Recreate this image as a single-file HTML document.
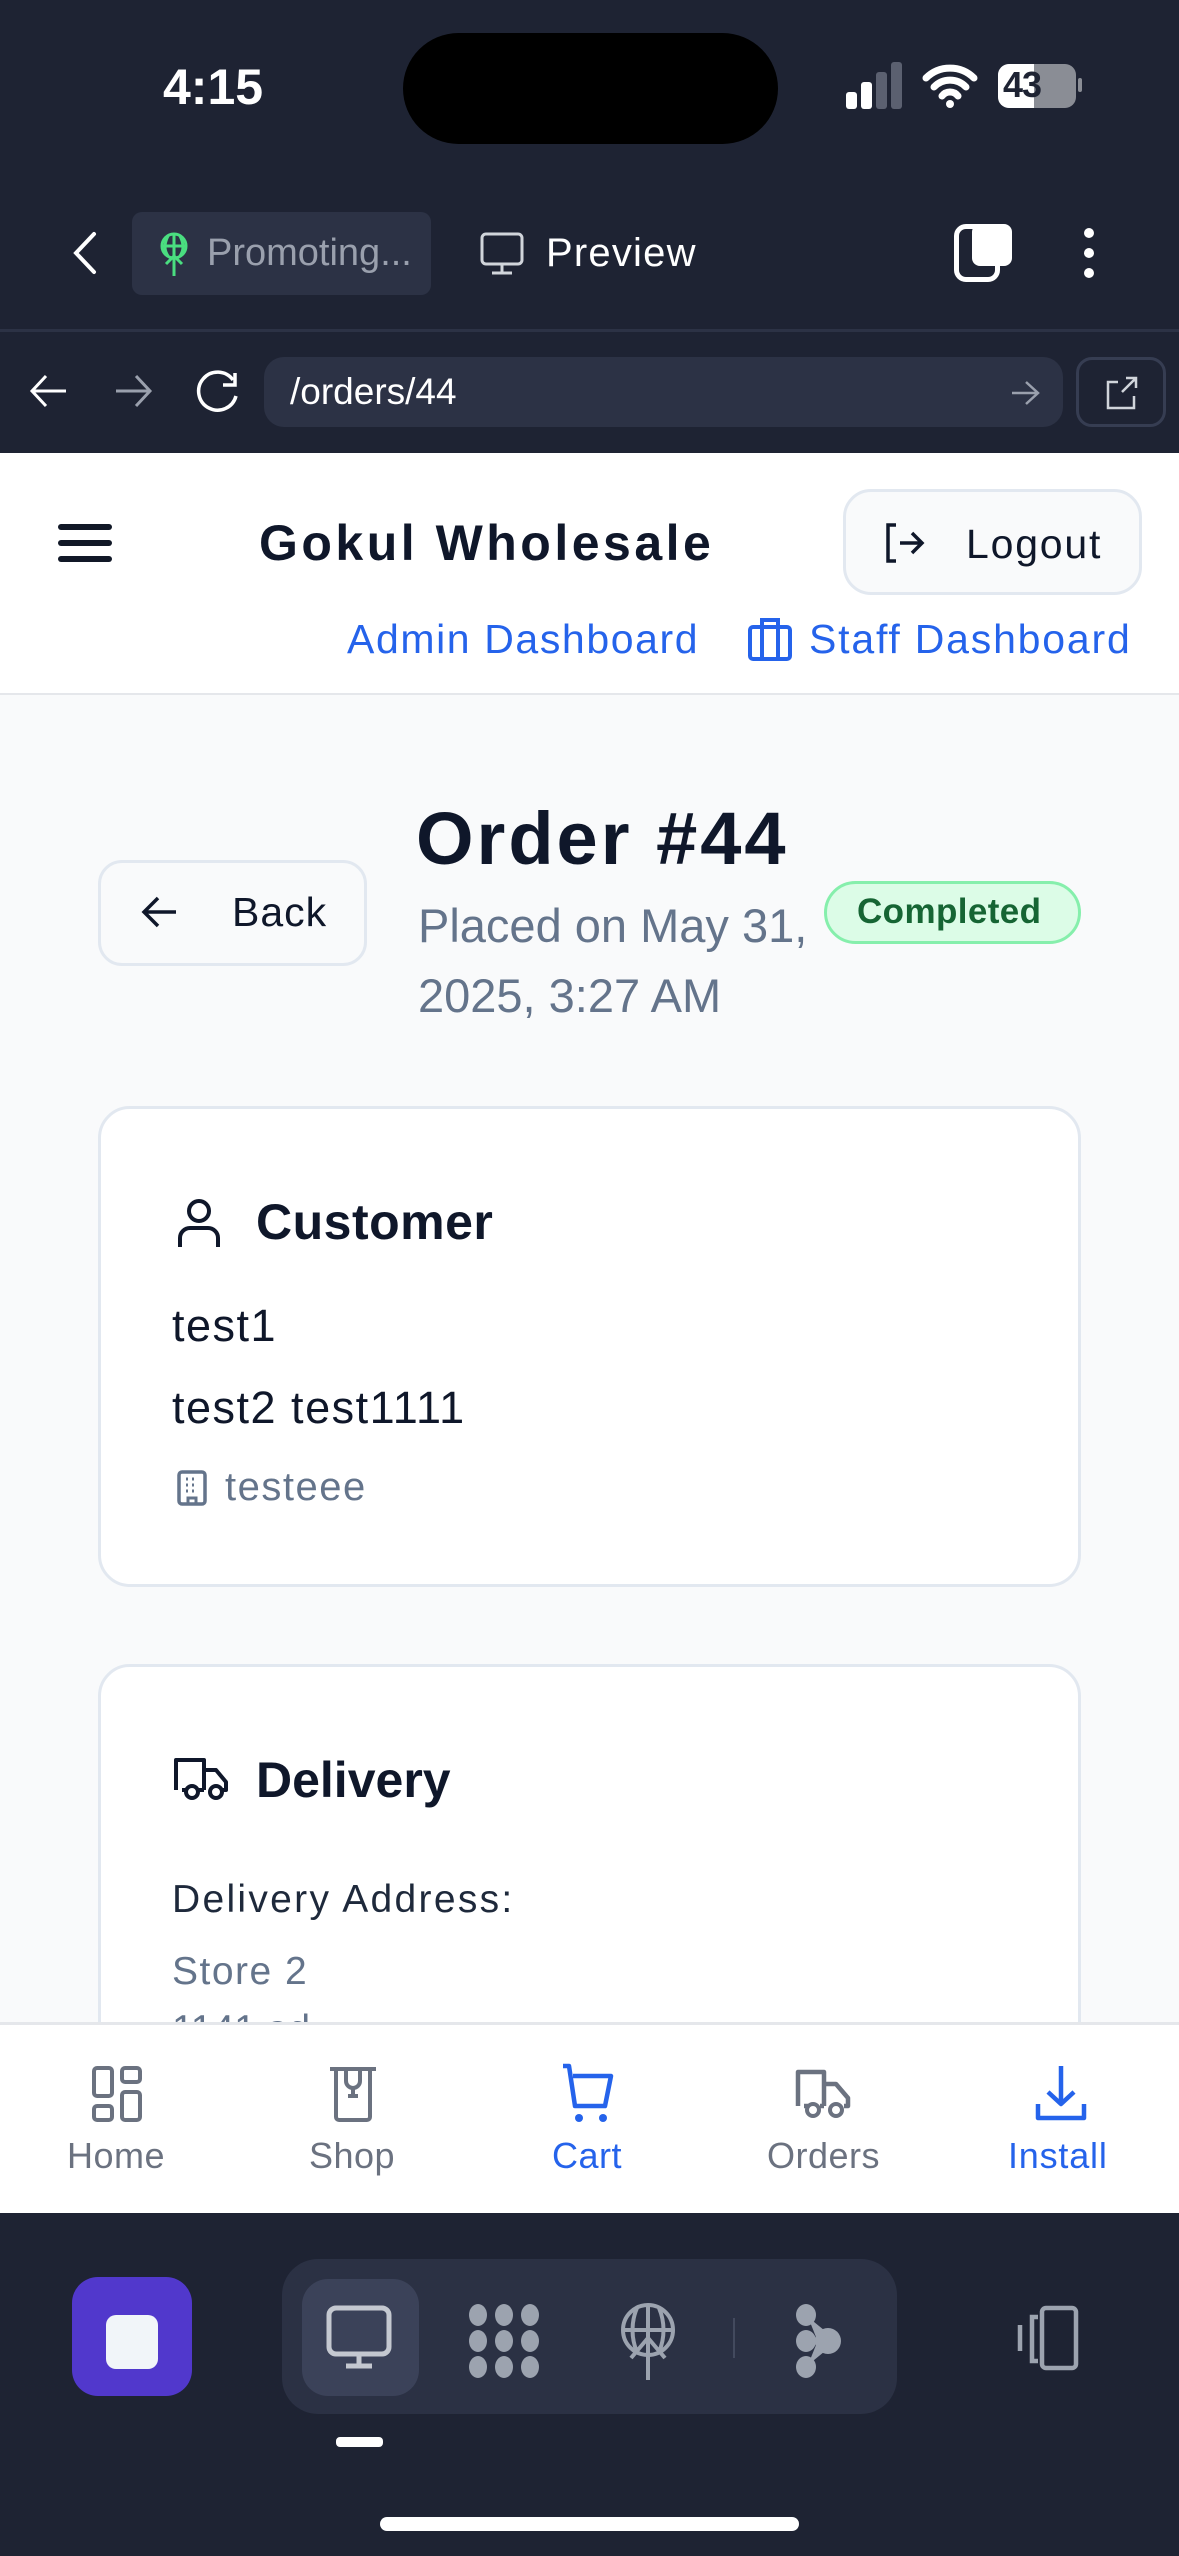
<!DOCTYPE html>
<html><head><meta charset="utf-8"><style>
*{margin:0;padding:0;box-sizing:border-box}
body{width:1179px;height:2556px;position:relative;overflow:hidden;background:#f9fafb;font-family:"Liberation Sans",sans-serif}
.a{position:absolute}
.t{position:absolute;white-space:nowrap;line-height:1}
</style></head><body>
<!-- top dark -->
<div class="a" style="left:0;top:0;width:1179px;height:453px;background:#1e2333"></div>
<div class="t" style="left:163px;top:62px;font-size:50px;font-weight:bold;color:#fff">4:15</div>
<div class="a" style="left:403px;top:33px;width:375px;height:111px;border-radius:56px;background:#000"></div>
<!-- signal -->
<div class="a" style="left:846px;top:92px;width:11px;height:17px;background:#fff;border-radius:3px"></div>
<div class="a" style="left:861px;top:82px;width:11px;height:27px;background:#fff;border-radius:3px"></div>
<div class="a" style="left:876px;top:72px;width:11px;height:37px;background:#5b6070;border-radius:3px"></div>
<div class="a" style="left:891px;top:62px;width:11px;height:47px;background:#5b6070;border-radius:3px"></div>
<svg class="a" style="left:922px;top:62px" width="56" height="46" viewBox="0 0 56 46"><path d="M4 16a34 34 0 0 1 48 0M12 25a22 22 0 0 1 32 0M20 34a10 10 0 0 1 16 0" stroke="#fff" stroke-width="7" fill="none" stroke-linecap="round"/><circle cx="28" cy="42" r="4" fill="#fff"/></svg>
<div class="a" style="left:998px;top:64px;width:78px;height:44px;border-radius:11px;background:#8a8d95;overflow:hidden"><div style="width:36px;height:44px;background:#fff"></div></div>
<div class="t" style="left:1003px;top:67px;font-size:36px;font-weight:bold;color:#1e2333;letter-spacing:-1px">43</div>
<div class="a" style="left:1078px;top:78px;width:4px;height:14px;background:#8a8d95;border-radius:2px"></div>
<!-- browser row -->
<svg class="a" style="left:68px;top:230px" width="34" height="46" viewBox="0 0 34 46"><path d="M26 4L8 23l18 19" stroke="#fff" stroke-width="4" fill="none" stroke-linecap="round"/></svg>
<div class="a" style="left:132px;top:212px;width:299px;height:83px;border-radius:10px;background:#2c3245"></div>
<svg class="a" style="left:158px;top:230px" width="32" height="48" viewBox="0 0 32 48"><circle cx="16" cy="16" r="12" stroke="#4ade80" stroke-width="3" fill="none"/><path d="M4 16h24M16 4v42M10 6c-4 8-4 14 0 20M22 6c4 8 4 14 0 20M8 34l8-8 8 8" stroke="#4ade80" stroke-width="3" fill="none"/></svg>
<div class="t" style="left:207px;top:234px;font-size:38px;color:#9aa0ad">Promoting...</div>
<svg class="a" style="left:480px;top:232px" width="44" height="44" viewBox="0 0 44 44"><rect x="2" y="2" width="40" height="30" rx="4" stroke="#d1d5db" stroke-width="3" fill="none"/><path d="M22 32v8M12 41h20" stroke="#d1d5db" stroke-width="3"/></svg>
<div class="t" style="left:546px;top:233px;font-size:40px;color:#fff;letter-spacing:1.2px">Preview</div>
<div class="a" style="left:954px;top:224px;width:46px;height:58px;border:5px solid #fff;border-radius:12px"></div>
<div class="a" style="left:972px;top:224px;width:40px;height:42px;background:#fff;border-radius:8px"></div>
<div class="a" style="left:1084px;top:228px;width:10px;height:10px;border-radius:5px;background:#fff"></div>
<div class="a" style="left:1084px;top:248px;width:10px;height:10px;border-radius:5px;background:#fff"></div>
<div class="a" style="left:1084px;top:268px;width:10px;height:10px;border-radius:5px;background:#fff"></div>
<div class="a" style="left:0;top:329px;width:1179px;height:3px;background:#2c3245"></div>
<!-- url row -->
<svg class="a" style="left:28px;top:372px" width="42" height="38" viewBox="0 0 42 38"><path d="M38 19H4M18 4L4 19l14 15" stroke="#fff" stroke-width="3" fill="none"/></svg>
<svg class="a" style="left:112px;top:372px" width="42" height="38" viewBox="0 0 42 38"><path d="M4 19h34M24 4l14 15-14 15" stroke="#9aa0ad" stroke-width="3" fill="none"/></svg>
<svg class="a" style="left:195px;top:370px" width="46" height="44" viewBox="0 0 46 44"><path d="M38 10A19 19 0 1 0 41 26" stroke="#fff" stroke-width="3.5" fill="none"/><path d="M40 3v12H28" stroke="#fff" stroke-width="3.5" fill="none"/></svg>
<div class="a" style="left:264px;top:357px;width:799px;height:70px;border-radius:20px;background:#2c3245"></div>
<div class="t" style="left:290px;top:373px;font-size:37px;color:#fff">/orders/44</div>
<svg class="a" style="left:1010px;top:380px" width="30" height="26" viewBox="0 0 30 26"><path d="M2 13h26M16 2l12 11-12 11" stroke="#9aa0ad" stroke-width="2.5" fill="none"/></svg>
<div class="a" style="left:1076px;top:357px;width:90px;height:70px;border-radius:16px;border:3px solid #363d52"></div>
<svg class="a" style="left:1104px;top:376px" width="34" height="34" viewBox="0 0 34 34"><path d="M14 6H4v26h26V20M18 16L32 2M22 2h10v10" stroke="#d1d5db" stroke-width="2.5" fill="none"/></svg>
<!-- header -->
<div class="a" style="left:0;top:453px;width:1179px;height:242px;background:#fff;border-bottom:2px solid #e5e7eb"></div>
<div class="a" style="left:58px;top:524px;width:54px;height:6px;background:#111827;border-radius:3px"></div>
<div class="a" style="left:58px;top:540px;width:54px;height:6px;background:#111827;border-radius:3px"></div>
<div class="a" style="left:58px;top:556px;width:54px;height:6px;background:#111827;border-radius:3px"></div>
<div class="t" style="left:259px;top:518px;font-size:50px;font-weight:bold;color:#0f172a;letter-spacing:3.5px">Gokul Wholesale</div>
<div class="a" style="left:843px;top:489px;width:299px;height:106px;border-radius:28px;border:3px solid #e2e8f0;background:#f9fafb"></div>
<svg class="a" style="left:882px;top:521px" width="44" height="44" viewBox="0 0 44 44"><path d="M14 4H6v36h8M18 22h22M30 12l10 10-10 10" stroke="#0f172a" stroke-width="3.5" fill="none"/></svg>
<div class="t" style="left:966px;top:524px;font-size:41px;color:#0f172a;letter-spacing:1.8px">Logout</div>
<div class="t" style="left:347px;top:619px;font-size:41px;color:#2563eb;letter-spacing:1.6px">Admin Dashboard</div>
<svg class="a" style="left:747px;top:617px" width="46" height="44" viewBox="0 0 46 44"><rect x="3" y="10" width="40" height="32" rx="3" stroke="#2563eb" stroke-width="4" fill="none"/><path d="M15 10V3h16v7M15 10v32M31 10v32" stroke="#2563eb" stroke-width="4" fill="none"/></svg>
<div class="t" style="left:809px;top:619px;font-size:41px;color:#2563eb;letter-spacing:1.8px">Staff Dashboard</div>
<!-- order header -->
<div class="a" style="left:98px;top:860px;width:269px;height:106px;border-radius:24px;border:3px solid #e2e8f0;background:#f9fafb"></div>
<svg class="a" style="left:140px;top:893px" width="40" height="38" viewBox="0 0 40 38"><path d="M36 19H4M18 5L4 19l14 14" stroke="#0f172a" stroke-width="3.5" fill="none"/></svg>
<div class="t" style="left:232px;top:892px;font-size:41px;color:#0f172a;letter-spacing:1px">Back</div>
<div class="t" style="left:416px;top:802px;font-size:74px;font-weight:bold;color:#0f172a;letter-spacing:3px">Order #44</div>
<div class="t" style="left:418px;top:891px;font-size:47px;color:#64748b;line-height:70px">Placed on May 31,<br>2025, 3:27 AM</div>
<div class="a" style="left:824px;top:881px;width:257px;height:63px;border-radius:32px;border:3px solid #86efac;background:#dcfce7"></div>
<div class="t" style="left:857px;top:894px;font-size:35px;font-weight:bold;color:#166534;letter-spacing:0.4px">Completed</div>
<!-- customer card -->
<div class="a" style="left:98px;top:1106px;width:983px;height:481px;border-radius:32px;border:3px solid #e2e8f0;background:#fff"></div>
<svg class="a" style="left:176px;top:1198px" width="46" height="50" viewBox="0 0 46 50"><circle cx="23" cy="13" r="10" stroke="#0f172a" stroke-width="4" fill="none"/><path d="M4 49V40a10 10 0 0 1 10-10h18a10 10 0 0 1 10 10v9" stroke="#0f172a" stroke-width="4" fill="none"/></svg>
<div class="t" style="left:256px;top:1197px;font-size:50px;font-weight:bold;color:#0f172a;letter-spacing:0.5px">Customer</div>
<div class="t" style="left:172px;top:1303px;font-size:45px;color:#0f172a;letter-spacing:1.5px">test1</div>
<div class="t" style="left:172px;top:1385px;font-size:45px;color:#0f172a;letter-spacing:1.5px">test2 test1111</div>
<svg class="a" style="left:176px;top:1470px" width="32" height="36" viewBox="0 0 32 36"><rect x="3" y="2" width="26" height="32" rx="3" stroke="#64748b" stroke-width="3.5" fill="none"/><path d="M10 9h2M16 9h2M22 9h0M10 15h2M16 15h2M10 21h2M16 21h2M12 34v-6h8v6" stroke="#64748b" stroke-width="3" fill="none"/></svg>
<div class="t" style="left:225px;top:1467px;font-size:40px;color:#64748b;letter-spacing:1.5px">testeee</div>
<!-- delivery card -->
<div class="a" style="left:98px;top:1664px;width:983px;height:500px;border-radius:32px;border:3px solid #e2e8f0;background:#fff"></div>
<svg class="a" style="left:172px;top:1754px" width="58" height="50" viewBox="0 0 58 50"><path d="M4 36V6h28v30M32 16h12l10 12v8h-4M32 36h-6M14 36h-4" stroke="#0f172a" stroke-width="4" fill="none" stroke-linejoin="round"/><circle cx="20" cy="38" r="6" stroke="#0f172a" stroke-width="4" fill="none"/><circle cx="44" cy="38" r="6" stroke="#0f172a" stroke-width="4" fill="none"/></svg>
<div class="t" style="left:256px;top:1755px;font-size:50px;font-weight:bold;color:#0f172a">Delivery</div>
<div class="t" style="left:172px;top:1880px;font-size:39px;color:#1e293b;letter-spacing:2.3px">Delivery Address:</div>
<div class="t" style="left:172px;top:1952px;font-size:39px;color:#64748b;letter-spacing:1.5px">Store 2</div>
<div class="t" style="left:172px;top:2010px;font-size:39px;color:#64748b">1141 ad</div>
<!-- bottom nav -->
<div class="a" style="left:0;top:2022px;width:1179px;height:191px;background:#fff;border-top:3px solid #e5e7eb"></div>
<svg class="a" style="left:92px;top:2066px" width="50" height="56" viewBox="0 0 50 56"><rect x="2" y="2" width="18" height="28" rx="3" stroke="#6b7280" stroke-width="4" fill="none"/><rect x="30" y="2" width="18" height="14" rx="3" stroke="#6b7280" stroke-width="4" fill="none"/><rect x="30" y="26" width="18" height="28" rx="3" stroke="#6b7280" stroke-width="4" fill="none"/><rect x="2" y="40" width="18" height="14" rx="3" stroke="#6b7280" stroke-width="4" fill="none"/></svg>
<div class="t" style="left:67px;top:2138px;font-size:36px;color:#6b7280;letter-spacing:0.5px">Home</div>
<svg class="a" style="left:326px;top:2066px" width="54" height="56" viewBox="0 0 54 56"><path d="M4 3h46M10 3v48a3 3 0 0 0 3 3h28a3 3 0 0 0 3-3V3M20 3v12a7 7 0 0 0 14 0V3M27 22v8M22 30h10" stroke="#6b7280" stroke-width="4" fill="none"/></svg>
<div class="t" style="left:309px;top:2138px;font-size:36px;color:#6b7280;letter-spacing:0.5px">Shop</div>
<svg class="a" style="left:559px;top:2062px" width="60" height="64" viewBox="0 0 60 64"><path d="M4 4h6l6 40h30l6-30H14" stroke="#2563eb" stroke-width="4.5" fill="none" stroke-linejoin="round"/><circle cx="20" cy="56" r="4" fill="#2563eb"/><circle cx="44" cy="56" r="4" fill="#2563eb"/></svg>
<div class="t" style="left:552px;top:2138px;font-size:36px;color:#2563eb;letter-spacing:0.5px">Cart</div>
<svg class="a" style="left:794px;top:2068px" width="60" height="54" viewBox="0 0 60 54"><path d="M4 38V4h26v34M30 16h12l12 14v8h-4M30 38h-4M14 38h-4" stroke="#6b7280" stroke-width="4.5" fill="none" stroke-linejoin="round"/><circle cx="19" cy="42" r="6" stroke="#6b7280" stroke-width="4" fill="none"/><circle cx="42" cy="42" r="6" stroke="#6b7280" stroke-width="4" fill="none"/></svg>
<div class="t" style="left:767px;top:2138px;font-size:36px;color:#6b7280;letter-spacing:0.5px">Orders</div>
<svg class="a" style="left:1034px;top:2064px" width="54" height="60" viewBox="0 0 54 60"><path d="M27 2v38M14 28l13 12 13-12M4 40v14h46V40" stroke="#2563eb" stroke-width="4.5" fill="none" stroke-linejoin="round"/></svg>
<div class="t" style="left:1008px;top:2138px;font-size:36px;color:#2563eb;letter-spacing:0.8px">Install</div>
<!-- bottom dark -->
<div class="a" style="left:0;top:2213px;width:1179px;height:343px;background:#1e2333"></div>
<div class="a" style="left:72px;top:2277px;width:120px;height:119px;border-radius:26px;background:#5138cc"></div>
<div class="a" style="left:106px;top:2315px;width:52px;height:54px;border-radius:10px;background:#f1f5f9"></div>
<div class="a" style="left:282px;top:2259px;width:615px;height:155px;border-radius:36px;background:#2b3144"></div>
<div class="a" style="left:302px;top:2279px;width:117px;height:117px;border-radius:26px;background:#3b4259"></div>
<svg class="a" style="left:326px;top:2305px" width="66" height="66" viewBox="0 0 66 66"><rect x="3" y="3" width="60" height="46" rx="7" stroke="#c4c8d0" stroke-width="5" fill="none"/><path d="M33 49v10M20 61h26" stroke="#c4c8d0" stroke-width="5"/></svg>
<svg class="a" style="left:466px;top:2303px" width="76" height="76" viewBox="0 0 76 76"><g fill="#9ca3af"><ellipse cx="12" cy="12" rx="9" ry="11"/><ellipse cx="38" cy="12" rx="9" ry="11"/><ellipse cx="64" cy="12" rx="9" ry="11"/><ellipse cx="12" cy="38" rx="9" ry="11"/><ellipse cx="38" cy="38" rx="9" ry="11"/><ellipse cx="64" cy="38" rx="9" ry="11"/><ellipse cx="12" cy="64" rx="9" ry="11"/><ellipse cx="38" cy="64" rx="9" ry="11"/><ellipse cx="64" cy="64" rx="9" ry="11"/></g></svg>
<svg class="a" style="left:619px;top:2302px" width="58" height="80" viewBox="0 0 58 80"><circle cx="29" cy="28" r="25" stroke="#9ca3af" stroke-width="4" fill="none"/><path d="M4 28h50M29 3v75M18 6c-6 14-6 30 0 44M40 6c6 14 6 30 0 44M12 56l17-20 17 20" stroke="#9ca3af" stroke-width="4" fill="none"/></svg>
<div class="a" style="left:733px;top:2318px;width:2px;height:40px;background:#434a5e"></div>
<svg class="a" style="left:794px;top:2303px" width="50" height="76" viewBox="0 0 50 76"><g fill="#9ca3af"><ellipse cx="12" cy="12" rx="10" ry="11"/><ellipse cx="12" cy="38" rx="10" ry="11"/><ellipse cx="12" cy="64" rx="10" ry="11"/><ellipse cx="34" cy="38" rx="13" ry="13"/><path d="M14 14l22 18-10 12zM14 62l22-18-10-12z"/></g></svg>
<svg class="a" style="left:1012px;top:2305px" width="68" height="66" viewBox="0 0 68 66"><rect x="30" y="3" width="34" height="60" rx="4" stroke="#9ca3af" stroke-width="4.5" fill="none"/><path d="M26 12h-6v44h6M8 20v26" stroke="#9ca3af" stroke-width="4.5" fill="none"/></svg>
<div class="a" style="left:336px;top:2437px;width:47px;height:10px;border-radius:4px;background:#fff"></div>
<div class="a" style="left:380px;top:2517px;width:419px;height:14px;border-radius:7px;background:#fff"></div>
</body></html>
